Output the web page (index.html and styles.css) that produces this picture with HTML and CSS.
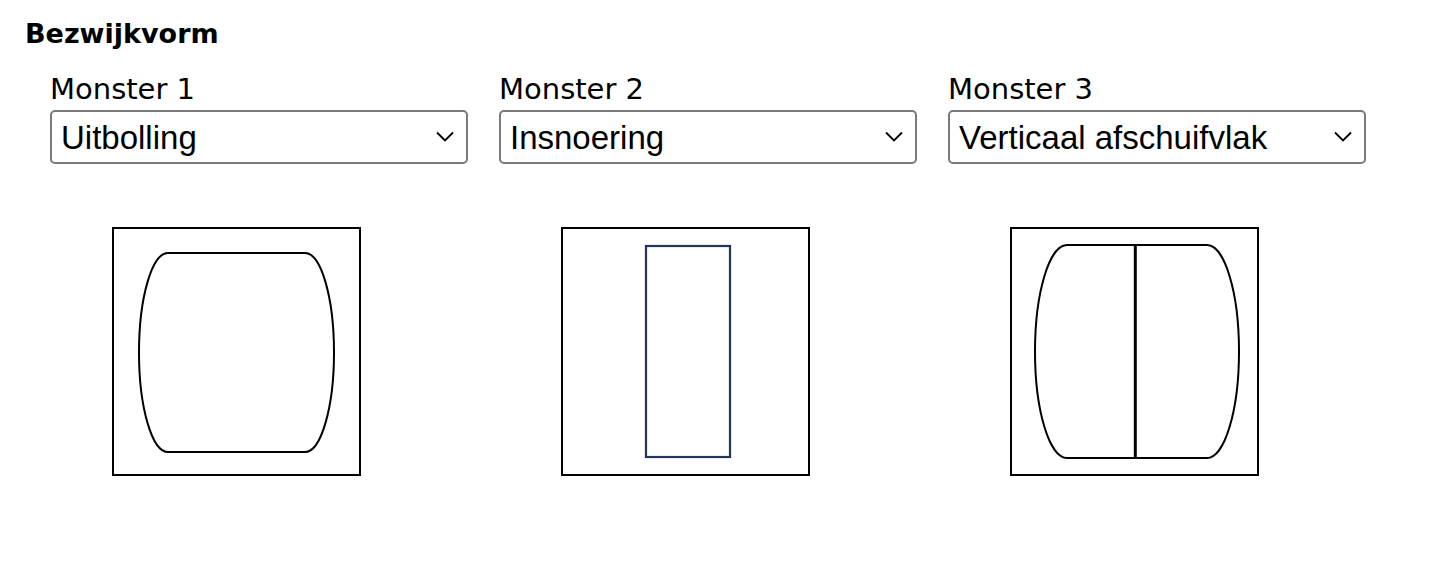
FILE: index.html
```html
<!DOCTYPE html>
<html lang="nl">
<head>
<meta charset="utf-8">
<title>Bezwijkvorm</title>
<link rel="stylesheet" href="styles.css">
</head>
<body>
<section class="section">
  <h2 class="title">Bezwijkvorm</h2>
  <div class="row">
    <div class="col">
      <label class="label" for="m1">Monster 1</label>
      <div class="select-wrap">
        <select id="m1" class="select"><option>Uitbolling</option><option>Insnoering</option><option>Verticaal afschuifvlak</option></select>
        <svg class="chev" width="18" height="11" viewBox="0 0 18 11"><path d="M1 1.5 L9 9.5 L17 1.5" fill="none" stroke="#000" stroke-width="1.8"/></svg>
      </div>
      <svg class="fig" width="249" height="249" viewBox="0 0 249 249">
        <rect x="1" y="1" width="247" height="247" fill="none" stroke="#000" stroke-width="2"/>
        <path d="M56 26 H193 A29 99.5 0 0 1 193 225 H56 A29 99.5 0 0 1 56 26 Z" fill="none" stroke="#000" stroke-width="2"/>
      </svg>
    </div>
    <div class="col">
      <label class="label" for="m2">Monster 2</label>
      <div class="select-wrap">
        <select id="m2" class="select"><option>Uitbolling</option><option selected>Insnoering</option><option>Verticaal afschuifvlak</option></select>
        <svg class="chev" width="18" height="11" viewBox="0 0 18 11"><path d="M1 1.5 L9 9.5 L17 1.5" fill="none" stroke="#000" stroke-width="1.8"/></svg>
      </div>
      <svg class="fig" width="249" height="249" viewBox="0 0 249 249">
        <rect x="1" y="1" width="247" height="247" fill="none" stroke="#000" stroke-width="2"/>
        <rect x="85" y="19" width="84" height="211" fill="none" stroke="#22365a" stroke-width="2.2"/>
      </svg>
    </div>
    <div class="col">
      <label class="label" for="m3">Monster 3</label>
      <div class="select-wrap">
        <select id="m3" class="select"><option>Uitbolling</option><option>Insnoering</option><option selected>Verticaal afschuifvlak</option></select>
        <svg class="chev" width="18" height="11" viewBox="0 0 18 11"><path d="M1 1.5 L9 9.5 L17 1.5" fill="none" stroke="#000" stroke-width="1.8"/></svg>
      </div>
      <svg class="fig" width="249" height="249" viewBox="0 0 249 249">
        <rect x="1" y="1" width="247" height="247" fill="none" stroke="#000" stroke-width="2"/>
        <path d="M57 18 H197 A32 106.5 0 0 1 197 231 H57 A32 106.5 0 0 1 57 18 Z" fill="none" stroke="#000" stroke-width="2"/>
        <line x1="125.3" y1="18" x2="125.3" y2="231" stroke="#000" stroke-width="3"/>
      </svg>
    </div>
  </div>
</section>
</body>
</html>
```
FILE: styles.css
```css
html, body {
  margin: 0;
  padding: 0;
  background: #fff;
}
body {
  font-family: "DejaVu Sans", "Open Sans", sans-serif;
  color: #000;
}
.section {
  padding: 18px 0 0 25px;
}
.title {
  margin: 0;
  font-size: 27px;
  font-weight: 700;
  line-height: 32px;
}
.row {
  display: flex;
  gap: 31px;
  margin-top: 22px;
  padding-left: 25px;
}
.col {
  width: 418px;
  display: flex;
  flex-direction: column;
}
.label {
  display: block;
  font-size: 29px;
  line-height: 34px;
  margin-bottom: 4px;
}
.select-wrap {
  position: relative;
  width: 418px;
  height: 54px;
}
.select {
  appearance: none;
  -webkit-appearance: none;
  box-sizing: border-box;
  width: 418px;
  height: 54px;
  margin: 0;
  padding: 0 40px 0 9px;
  border: 2px solid #7a7a7a;
  border-radius: 5px;
  background: #fff;
  color: #000;
  font-family: "Liberation Sans", Arial, sans-serif;
  font-size: 33px;
}
.chev {
  position: absolute;
  right: 14px;
  top: 21px;
  pointer-events: none;
}
.fig {
  display: block;
  margin: 63px 0 0 62px;
}
```
